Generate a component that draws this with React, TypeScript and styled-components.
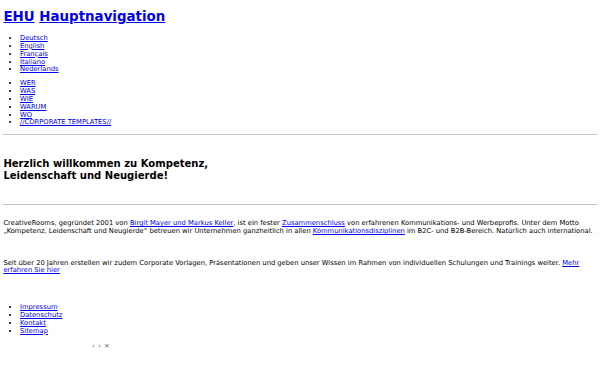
import { createGlobalStyle } from "styled-components";
import styled from "styled-components";

const GlobalStyle = createGlobalStyle`
  html, body {
    margin: 0;
    padding: 0;
    background: #ffffff;
  }
  body {
    font-family: "DejaVu Sans", sans-serif;
    color: #000000;
  }
`;

const Page = styled.div`
  padding: 0 3.3px 0 3.4px;
  font-size: 6.75px;
  line-height: 7.9px;
`;

const Link = styled.a`
  color: #0000ee;
  text-decoration: underline;
`;

const Title = styled.h1`
  margin: 9px 0 10.2px;
  font-size: 13.4px;
  line-height: 15.6px;
  font-weight: bold;
`;

const NavList = styled.ul<{ $gap: number }>`
  margin: 0 0 ${(p) => p.$gap}px;
  padding-left: 16.6px;
  list-style: disc;

  li {
    line-height: 7.9px;
  }
`;

const Divider = styled.hr`
  margin: 0;
  border: none;
  border-top: 1px solid #c4c4c4;
`;

const Welcome = styled.h2`
  margin: 23.4px 0 22.6px;
  font-size: 10.05px;
  line-height: 11.6px;
  font-weight: bold;
`;

const Intro = styled.p<{ $gap: number; $top?: number }>`
  margin: ${(p) => p.$top ?? 0}px 0 ${(p) => p.$gap}px;
  font-size: 6.75px;
  line-height: 7.9px;
`;

const Controls = styled.div`
  margin-top: 7.5px;
  padding-left: 88.5px;
  font-size: 6.75px;
  line-height: 7.9px;
  color: #555555;
  letter-spacing: 0.6px;
`;

const languages = ["Deutsch", "English", "Français", "Italiano", "Nederlands"];
const menu = ["WER", "WAS", "WIE", "WARUM", "WO", "//CORPORATE TEMPLATES//"];
const footer = ["Impressum", "Datenschutz", "Kontakt", "Sitemap"];

export default function App() {
  return (
    <>
      <GlobalStyle />
      <Page>
        <Title>
          <Link href="#">EHU</Link> <Link href="#">Hauptnavigation</Link>
        </Title>
        <NavList $gap={5.6}>
          {languages.map((l) => (
            <li key={l}>
              <Link href="#">{l}</Link>
            </li>
          ))}
        </NavList>
        <NavList $gap={6.2}>
          {menu.map((m) => (
            <li key={m}>
              <Link href="#">{m}</Link>
            </li>
          ))}
        </NavList>
        <Divider />
        <Welcome>
          Herzlich willkommen zu Kompetenz,
          <br />
          Leidenschaft und Neugierde!
        </Welcome>
        <Divider />
        <Intro $top={15.4} $gap={23.6}>
          CreativeRooms, gegründet 2001 von <Link href="#">Birgit Mayer und Markus Keller</Link>, ist ein
          fester <Link href="#">Zusammenschluss</Link> von erfahrenen Kommunikations- und Werbeprofis.
          Unter dem Motto „Kompetenz, Leidenschaft und Neugierde“ betreuen wir Unternehmen ganzheitlich
          in allen <Link href="#">Kommunikationsdisziplinen</Link> im B2C- und B2B-Bereich. Natürlich auch
          international.
        </Intro>
        <Intro $gap={28.6}>
          Seit über 20 Jahren erstellen wir zudem Corporate Vorlagen, Präsentationen und geben unser
          Wissen im Rahmen von individuellen Schulungen und Trainings weiter.{" "}
          <Link href="#">Mehr erfahren Sie hier</Link>
        </Intro>
        <NavList $gap={0}>
          {footer.map((f) => (
            <li key={f}>
              <Link href="#">{f}</Link>
            </li>
          ))}
        </NavList>
        <Controls>‹ › ×</Controls>
      </Page>
    </>
  );
}
